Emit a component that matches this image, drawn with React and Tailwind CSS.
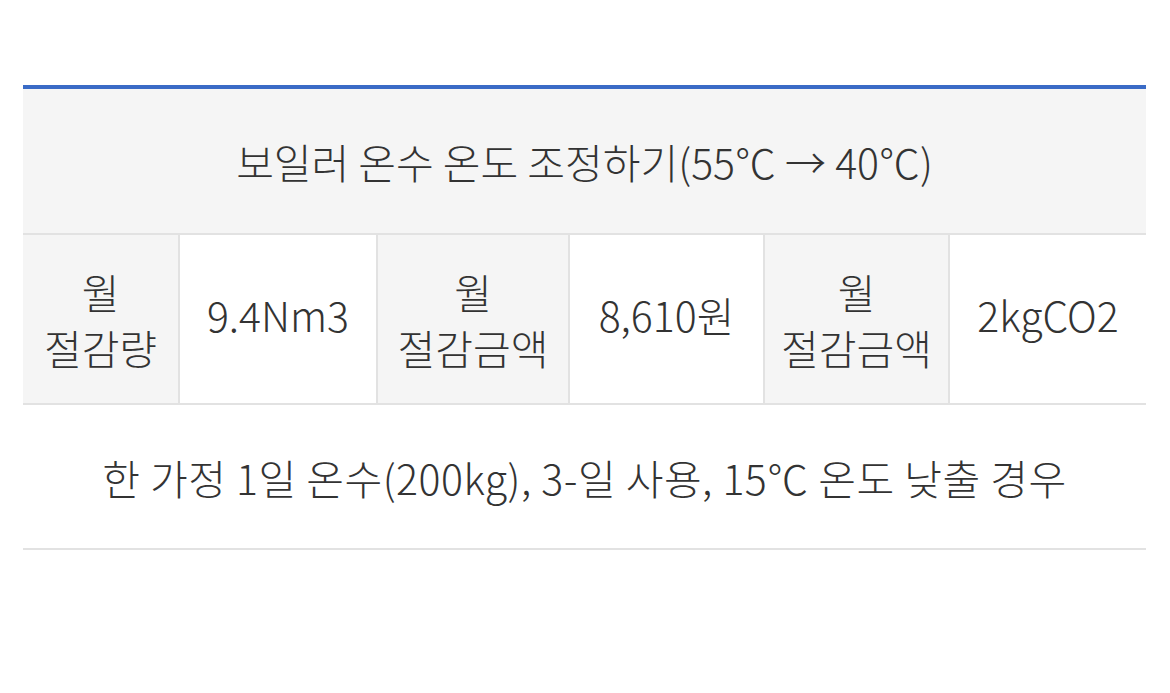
import React from 'react'

const cells = [
  { top: '월', bottom: '절감량', value: '9.4Nm3' },
  { top: '월', bottom: '절감금액', value: '8,610원' },
  { top: '월', bottom: '절감금액', value: '2kgCO2' },
]

export default function App() {
  return (
    <div className="min-h-[693px] bg-white px-[23px] pt-[85px] text-[#333] text-[41px] leading-[56px] font-light" style={{ fontFamily: '"Noto Sans CJK KR", "Noto Sans", sans-serif' }}>
      <table className="w-[1123px] table-fixed border-collapse border-t-4 border-[#3a6bc6]">
        <colgroup>
          <col className="w-[156px]" />
          <col className="w-[198px]" />
          <col className="w-[192px]" />
          <col className="w-[195px]" />
          <col className="w-[185px]" />
          <col className="w-[197px]" />
        </colgroup>
        <tbody>
          <tr className="h-[147px] bg-[#f5f5f5] border-b-2 border-[#e2e2e2]">
            <td colSpan={6} className="text-center">보일러 온수 온도 조정하기(55℃ → 40℃)</td>
          </tr>
          <tr className="h-[170px] border-b-2 border-[#e2e2e2]">
            {cells.map((c, i) => (
              <React.Fragment key={i}>
                <th className={`bg-[#f5f5f5] text-center font-light ${i > 0 ? 'border-l-2 border-[#e2e2e2]' : ''}`}>
                  {c.top}
                  <br />
                  {c.bottom}
                </th>
                <td className="border-l-2 border-[#e2e2e2] text-center align-middle">
                  <div className="-mt-[10px]">{c.value}</div>
                </td>
              </React.Fragment>
            ))}
          </tr>
          <tr className="h-[145px] border-b-2 border-[#e2e2e2]">
            <td colSpan={6} className="text-center tracking-[0.5px]">한 가정 1일 온수(200kg), 3-일 사용, 15℃ 온도 낮출 경우</td>
          </tr>
        </tbody>
      </table>
    </div>
  )
}
